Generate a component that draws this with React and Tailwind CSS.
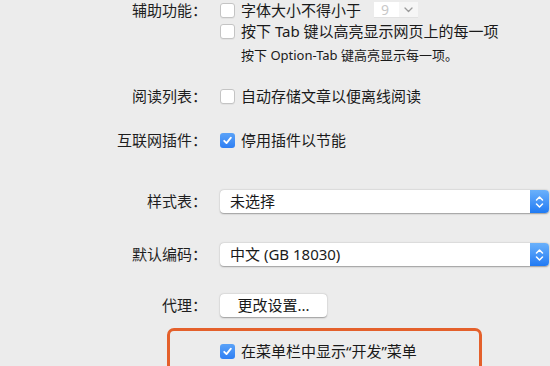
import React from "react";

const FONT = '"Noto Sans", "Noto Sans CJK SC", sans-serif';

function Checkbox({ checked }) {
  if (checked) {
    return (
      <span className="flex h-[15px] w-[15px] shrink-0 items-center justify-center rounded-[3px] bg-gradient-to-b from-[#5aa2f8] to-[#2f7ff3]">
        <svg width="11" height="11" viewBox="0 0 11 11" fill="none">
          <path d="M2.2 5.8 L4.5 8.1 L8.9 2.6" stroke="white" strokeWidth="1.8" strokeLinecap="round" strokeLinejoin="round" />
        </svg>
      </span>
    );
  }
  return (
    <span className="h-[15px] w-[15px] shrink-0 rounded-[3px] border border-[#c4c4c4] bg-white shadow-[0_1px_0_rgba(0,0,0,0.04)]" />
  );
}

function Row({ label, children, className = "" }) {
  return (
    <div className={`flex items-center ${className}`}>
      <div className="w-[207px] shrink-0 text-right text-[15px] text-[#1e1e1e]">{label}</div>
      <div className="ml-[13px] flex items-center">{children}</div>
    </div>
  );
}

function Select({ value }) {
  return (
    <div className="flex h-[23px] w-[329px] items-center rounded-[4px] bg-white shadow-[0_0.5px_1.5px_rgba(0,0,0,0.35)]">
      <span className="flex-1 pl-[10px] text-[15px] text-[#1a1a1a]">{value}</span>
      <span className="flex h-[23px] w-[19px] items-center justify-center rounded-r-[4px] bg-gradient-to-b from-[#6ab1fb] to-[#1f7af3]">
        <svg width="9" height="14" viewBox="0 0 9 14" fill="none">
          <path d="M1.5 5 L4.5 2 L7.5 5 M1.5 9 L4.5 12 L7.5 9" stroke="white" strokeWidth="1.5" strokeLinecap="round" strokeLinejoin="round" />
        </svg>
      </span>
    </div>
  );
}

export default function App() {
  return (
    <div className="h-[366px] w-[550px] overflow-hidden bg-[#ececec]" style={{ fontFamily: FONT }}>
      <Row label="辅助功能：" className="h-[20px]">
        <Checkbox />
        <span className="ml-[6px] text-[15px] text-[#1a1a1a]">字体大小不得小于</span>
        <div className="ml-[13px] flex h-[16px] border-b border-[#e2e2e2]">
          <span className="flex w-[25px] items-center bg-white pl-[7px] text-[14px] leading-[16px] text-[#c8c8c8]">9</span>
          <span className="flex w-[19px] items-center justify-center bg-[#f6f6f6]">
            <svg width="9" height="6" viewBox="0 0 9 6" fill="none">
              <path d="M1 1 L4.5 4.5 L8 1" stroke="#9a9a9a" strokeWidth="1.3" strokeLinecap="round" strokeLinejoin="round" />
            </svg>
          </span>
        </div>
      </Row>
      <Row label="" className="mt-[1px] h-[20px]">
        <Checkbox />
        <span className="ml-[6px] text-[15px] text-[#1a1a1a]">按下 Tab 键以高亮显示网页上的每一项</span>
      </Row>
      <Row label="" className="mt-[6px] h-[18px]">
        <span className="ml-[21px] text-[13px] text-[#1a1a1a]">按下 Option-Tab 键高亮显示每一项。</span>
      </Row>
      <Row label="阅读列表：" className="mt-[21px] h-[20px]">
        <Checkbox />
        <span className="ml-[6px] text-[15px] text-[#1a1a1a]">自动存储文章以便离线阅读</span>
      </Row>
      <Row label="互联网插件：" className="mt-[24px] h-[20px]">
        <Checkbox checked />
        <span className="ml-[6px] text-[15px] text-[#1a1a1a]">停用插件以节能</span>
      </Row>
      <Row label="样式表：" className="mt-[40px] h-[23px]">
        <Select value="未选择" />
      </Row>
      <Row label="默认编码：" className="mt-[30px] h-[23px]">
        <Select value="中文 (GB 18030)" />
      </Row>
      <Row label="代理：" className="mt-[27px] h-[24px]">
        <button className="flex h-[23px] w-[107px] items-center justify-center rounded-[4px] bg-white text-[15px] text-[#1a1a1a] shadow-[0_0.5px_1.5px_rgba(0,0,0,0.35)]">
          更改设置...
        </button>
      </Row>
      <div className="ml-[167px] mt-[11px] h-[52px] w-[315px] rounded-[7px] border-[3px] border-[#e4602b] pl-[50px] pt-[10px]">
        <div className="flex h-[20px] items-center">
          <Checkbox checked />
          <span className="ml-[6px] text-[15px] text-[#1a1a1a]">在菜单栏中显示“开发”菜单</span>
        </div>
      </div>
    </div>
  );
}
